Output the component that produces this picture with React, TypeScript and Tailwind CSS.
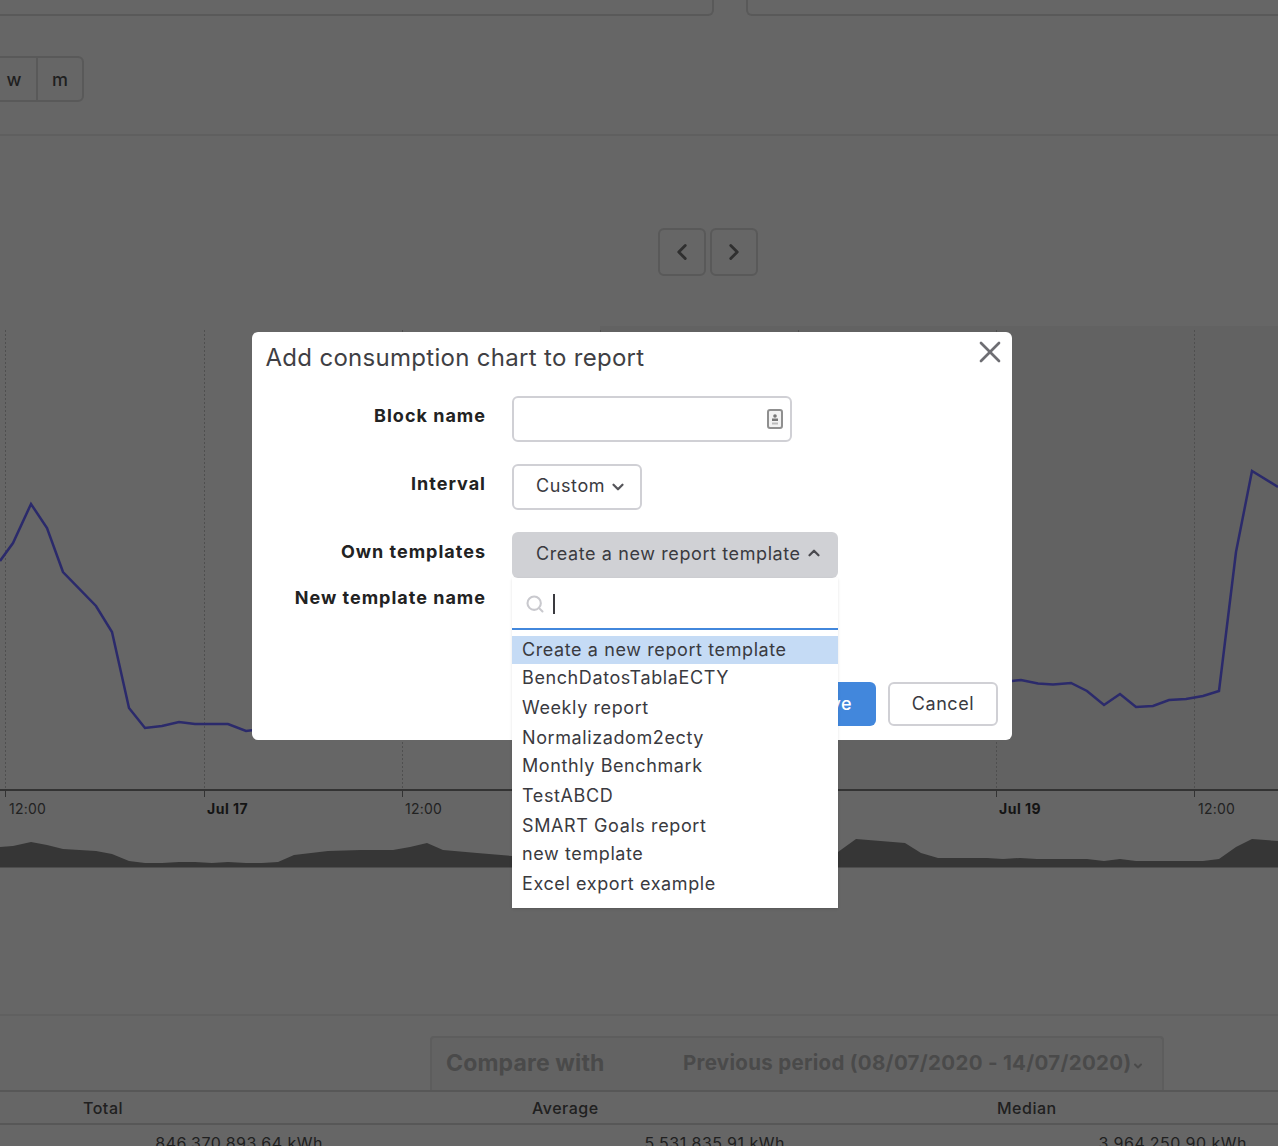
import React from 'react';
import { ChevronDown, ChevronLeft, ChevronRight, ChevronUp, Search, X } from 'lucide-react';

const linePoints = [
  '0,561 13,543 31,504 47,528 63,572 96,606 112,632 129,708 145,728 162,726 179,722 195,724 228,724 246,731 262,729',
  '1012,681 1021,680 1038,683.5 1053,684.5 1071,683 1087,691 1104,705 1120,694 1136,707 1153,706 1169,700 1186,699 1203,696 1219,691 1236,552 1252,471 1278,487',
];

const areaPoints =
  '0,867.5 0,847 13,846 31,842 47,845 63,849 96,851 112,854 129,861 145,863 162,863 179,862 195,862 212,863 228,862 246,863 262,863 278,862 294,855 311,853 328,851 361,850 393,850 410,847 427,843 443,850 477,853 512,856 838,852 856,839 905,843 921,853 938,858 987,858 1003,859 1020,858 1037,859 1087,859 1104,861 1120,859 1136,861 1203,861 1219,859 1236,847 1252,839 1278,841 1278,867.5';

const gridLines = [5, 204, 402, 600, 798, 996, 1194];

const axisLabels = [
  { x: 9, text: '12:00', bold: false },
  { x: 207, text: 'Jul 17', bold: true },
  { x: 405, text: '12:00', bold: false },
  { x: 801, text: '12:00', bold: false },
  { x: 999, text: 'Jul 19', bold: true },
  { x: 1198, text: '12:00', bold: false },
];

const templates = [
  'BenchDatosTablaECTY',
  'Weekly report',
  'Normalizadom2ecty',
  'Monthly Benchmark',
  'TestABCD',
  'SMART Goals report',
  'new template',
  'Excel export example',
];

const Chart = () => (
  <svg viewBox="0 326 1278 542" className="block h-[542px] w-[1278px]">
    <rect x="600" y="326" width="678" height="464" fill="#626262" />
    {gridLines.map((x) => (
      <line key={x} x1={x + 0.5} x2={x + 0.5} y1="330" y2="790" stroke="#4f4f4f" strokeDasharray="2 2" />
    ))}
    {linePoints.map((points) => (
      <polyline key={points} points={points} fill="none" stroke="#2b2a6b" strokeWidth="2.5" />
    ))}
    <line x1="0" x2="1278" y1="790" y2="790" stroke="#333333" strokeWidth="2" />
    {gridLines.map((x) => (
      <line key={x} x1={x + 0.5} x2={x + 0.5} y1="790" y2="797" stroke="#333333" />
    ))}
    {axisLabels.map((label) => (
      <text
        key={label.x}
        x={label.x}
        y="814"
        fill={label.bold ? '#141414' : '#222222'}
        fontSize="14"
        fontWeight={label.bold ? 700 : 400}
        letterSpacing={label.bold ? 0.5 : 0.25}
      >
        {label.text}
      </text>
    ))}
    <polygon points={areaPoints} fill="#363636" />
  </svg>
);

const Background = () => (
  <>
    <div className="flex h-[16px] gap-[32px] ml-[-10px] mr-[-12px]">
      <div className="w-[724px] rounded-br-md border-r-2 border-b-2 border-[#595959]" />
      <div className="flex-1 rounded-bl-md border-l-2 border-b-2 border-[#595959]" />
    </div>

    <div className="h-[120px] border-b-2 border-[#5f5f5f] pt-[40px]">
      <div className="ml-[-12px] flex h-[46px] w-[96px] rounded-md border-2 border-[#595959] text-[18px] font-medium text-[#1f1f1f]">
        <div className="flex w-[48px] items-center justify-center border-r-2 border-[#595959] pl-[2px]">w</div>
        <div className="flex flex-1 items-center justify-center">m</div>
      </div>
    </div>

    <div className="flex h-[190px] gap-[4px] pl-[658px] pt-[92px]">
      <div className="flex h-[48px] w-[48px] items-center justify-center rounded-md border-2 border-[#595959] text-[#2f2f2f]">
        <ChevronLeft size={26} strokeWidth={2.6} />
      </div>
      <div className="flex h-[48px] w-[48px] items-center justify-center rounded-md border-2 border-[#595959] text-[#2f2f2f]">
        <ChevronRight size={26} strokeWidth={2.6} />
      </div>
    </div>

    <Chart />

    <div className="h-[148px] border-b-2 border-[#606060]" />

    <div className="pl-[430px] pt-[20px]">
      <div className="flex h-[54px] w-[734px] items-center rounded-t border-2 border-b-0 border-[#5d5d5d] bg-[#636363] pb-[2px] pl-[14px] font-bold text-[#4a4a4a]">
        <span className="w-[237px] text-[23px] tracking-[0.15px]">Compare with</span>
        <span className="text-[20.5px] tracking-[0.3px]">Previous period (08/07/2020 - 14/07/2020)</span>
        <ChevronDown size={12} strokeWidth={4} className="ml-[1px] mt-[6px]" />
      </div>
    </div>

    <div className="flex h-[35px] items-center border-y-2 border-[#575757] text-[16px] font-medium tracking-[0.5px] text-[#202020]">
      <span className="ml-[83px] w-[449px]">Total</span>
      <span className="w-[465px]">Average</span>
      <span>Median</span>
    </div>

    <div className="flex pt-[6px] text-[16px] tracking-[0.5px] text-[#202020]">
      <span className="w-[323px] text-right">846,370,893.64 kWh</span>
      <span className="w-[462px] text-right">5,531,835.91 kWh</span>
      <span className="w-[462px] text-right">3,964,250.90 kWh</span>
    </div>
  </>
);

const FormRow = ({ label, children }: { label: string; children: React.ReactNode }) => (
  <div className="flex">
    <label className="w-[234px] pt-[8px] text-right text-[18px] leading-[24px] font-bold tracking-[1px] text-[#222222]">
      {label}
    </label>
    <div className="ml-[26px]">{children}</div>
  </div>
);

const TemplateDropdown = () => (
  <div className="absolute left-[260px] top-[246px] z-10 h-[330px] w-[326px] bg-white text-[18px] tracking-[0.6px] text-[#3a3a3f] shadow-sm">
    <div className="flex h-[52px] items-center border-b-2 border-[#4287dc] pl-[13px] pt-[2px]">
      <Search size={20} strokeWidth={2.5} className="text-[#c9c9ce]" />
      <div className="ml-[8px] h-[20px] w-[2px] bg-[#3a3a3f]" />
    </div>
    <div className="mt-[6px]">
      <div className="flex h-[28px] items-center bg-[#c5dbf5] pb-[2px] pl-[10px]">Create a new report template</div>
      <div className="mt-[-1px]">
        {templates.map((name, i) => (
          <div key={name} className={`flex h-[28px] items-center pl-[10px] ${i % 3 === 0 ? '' : 'mt-[2px]'}`}>
            {name}
          </div>
        ))}
      </div>
    </div>
  </div>
);

const Modal = () => (
  <div className="absolute left-[252px] top-[332px] h-[408px] w-[760px] rounded-md bg-white">
    <div className="flex h-[64px] items-start justify-between pl-[13.5px] pr-[4px]">
      <h2 className="pt-[9px] text-[24px] leading-[34px] tracking-[0.3px] text-[#3f3f44]">
        Add consumption chart to report
      </h2>
      <X size={36} strokeWidth={1.8} className="mt-[2px] text-[#6e6e73]" />
    </div>

    <div className="flex flex-col gap-[22px]">
      <FormRow label="Block name">
        <div className="flex h-[46px] w-[280px] items-center justify-end rounded-md border-2 border-[#d0d0d5] pr-[6px]">
          <svg width="18" height="22" viewBox="0 0 18 22" className="text-[#8f8f8f]">
            <rect x="2" y="2" width="14" height="18" rx="2" fill="#f2f2f2" stroke="currentColor" strokeWidth="2" />
            <circle cx="9" cy="8" r="1.8" fill="#777777" />
            <rect x="6" y="10.5" width="6" height="2.5" fill="#777777" />
            <rect x="6" y="14.5" width="6" height="2" fill="#bbbbbb" />
          </svg>
        </div>
      </FormRow>
      <FormRow label="Interval">
        <div className="flex h-[46px] w-[130px] items-center rounded-md border-2 border-[#d0d0d5] pb-[4px] pl-[22px] text-[18px] tracking-[0.6px] text-[#3a3a3f]">
          Custom
          <ChevronDown size={18} strokeWidth={3} className="ml-[4px] mt-[4px] text-[#55555a]" />
        </div>
      </FormRow>
      <FormRow label="Own templates">
        <div className="flex h-[46px] w-[326px] items-center rounded-md bg-[#d0d1d5] pb-[4px] pl-[24px] text-[18px] tracking-[0.6px] text-[#3a3a3f]">
          Create a new report template
          <ChevronUp size={18} strokeWidth={3} className="ml-[4px] mt-[-1px] text-[#4a4a4f]" />
        </div>
      </FormRow>
    </div>

    <div className="flex">
      <label className="w-[234px] pt-[8px] text-right text-[18px] leading-[24px] font-bold tracking-[1px] text-[#222222]">
        New template name
      </label>
    </div>

    <div className="absolute bottom-[14px] right-[14px] flex gap-[12px]">
      <div className="flex h-[44px] w-[86px] items-center justify-center rounded-md bg-[#4287dc] pb-[2px] pr-[6px] text-[18px] font-medium tracking-[0.6px] text-white">
        Save
      </div>
      <div className="flex h-[44px] w-[110px] items-center justify-center rounded-md border-2 border-[#d0d0d5] pb-[2px] text-[18px] tracking-[0.6px] text-[#3a3a3f]">
        Cancel
      </div>
    </div>

    <TemplateDropdown />
  </div>
);

export default function App() {
  return (
    <div className="relative h-[1146px] w-full overflow-hidden bg-[#666666] font-['Inter',sans-serif]">
      <Background />
      <Modal />
    </div>
  );
}
